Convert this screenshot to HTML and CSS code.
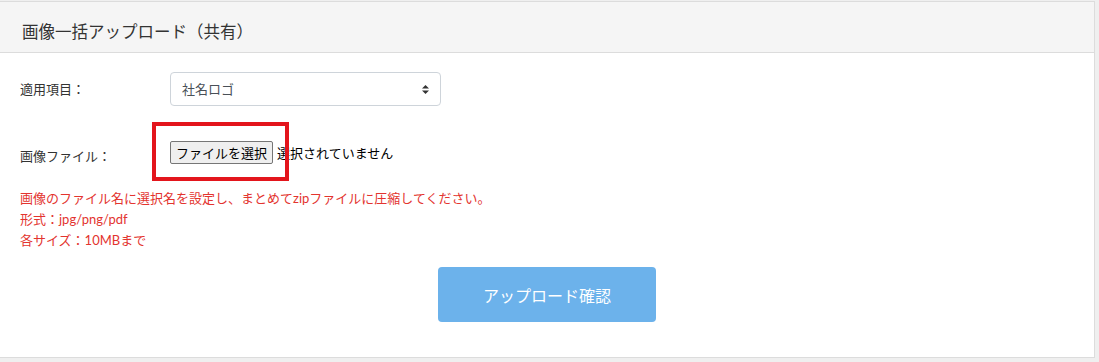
FILE: index.html
```html
<!DOCTYPE html>
<html lang="ja">
<head>
    <meta charset="UTF-8">
    <meta name="viewport" content="width=device-width, initial-scale=1.0">
    <title>画像一括アップロード（共有）</title>
    <link rel="stylesheet" href="styles.css">
</head>
<body>
    <div class="panel">
        <div class="panel-heading">画像一括アップロード（共有）</div>
        <div class="panel-body">
            <div class="form-row">
                <label class="form-label">適用項目：</label>
                <div class="select-wrap">
                    <select class="form-select">
                        <option>社名ロゴ</option>
                    </select>
                    <svg class="select-arrows" width="7" height="9" viewBox="0 0 7 9">
                        <path d="M3.5 0 L7 3.6 L0 3.6 Z" fill="#333"/>
                        <path d="M3.5 9 L7 5.4 L0 5.4 Z" fill="#333"/>
                    </svg>
                </div>
            </div>
            <div class="form-row file-row">
                <label class="form-label">画像ファイル：</label>
                <div class="file-input">
                    <button type="button" class="file-btn">ファイルを選択</button>
                    <span class="file-name">選択されていません</span>
                    <span class="mark"></span>
                </div>
            </div>
            <div class="notes">
                <p>画像のファイル名に選択名を設定し、まとめてzipファイルに圧縮してください。</p>
                <p>形式：jpg/png/pdf</p>
                <p>各サイズ：10MBまで</p>
            </div>
            <div class="actions">
                <button type="button" class="btn-confirm">アップロード確認</button>
            </div>
        </div>
    </div>
</body>
</html>
```

FILE: styles.css
```css
body {
    margin: 0;
    padding-top: 1px;
    background-color: #efefef;
    font-family: "Lato", "Noto Sans CJK JP", sans-serif;
    color: #333;
}
.panel {
    width: 1094px;
    background-color: #fff;
    border: 1px solid #dcdcdc;
    border-left: none;
}
.panel-heading {
    background-color: #f5f5f5;
    border-bottom: 1px solid #dcdcdc;
    padding: 19px 22px 9px;
    line-height: 22px;
    font-size: 16.5px;
}
.panel-body {
    padding: 19px 20px 35px 20px;
}
.form-row {
    display: grid;
    grid-template-columns: 150px auto;
    align-items: center;
}
.form-label {
    font-size: 13px;
    line-height: 20px;
    color: #333;
}
.select-wrap {
    position: relative;
    width: 271px;
}
.form-select {
    appearance: none;
    -webkit-appearance: none;
    width: 271px;
    height: 34px;
    padding: 0 11px;
    border: 1px solid #ced4da;
    border-radius: 4px;
    background-color: #fff;
    font-family: "Lato", "Noto Sans CJK JP", sans-serif;
    font-size: 13px;
    color: #495057;
}
.select-arrows {
    position: absolute;
    right: 12px;
    top: 13px;
}
.file-row {
    margin-top: 35px;
    align-items: start;
}
.file-row .form-label {
    padding-top: 5px;
}
.file-input {
    position: relative;
    display: flex;
    align-items: center;
    gap: 4px;
}
.file-btn {
    height: 23px;
    padding: 0 5px;
    background-color: #efefef;
    border: 1px solid #767676;
    border-radius: 2px;
    font-family: "Noto Sans CJK JP", sans-serif;
    font-size: 13px;
    color: #000;
}
.file-name {
    font-family: "Noto Sans CJK JP", sans-serif;
    font-size: 13px;
    color: #000;
}
.mark {
    position: absolute;
    left: -18px;
    top: -19px;
    width: 129px;
    height: 51px;
    border: 4px solid #e3151c;
}
.notes {
    margin-top: 22px;
    color: #e3342f;
    font-size: 13px;
    line-height: 21px;
}
.notes p {
    margin: 0;
}
.actions {
    margin-top: 16px;
    text-align: center;
}
.btn-confirm {
    width: 218px;
    height: 55px;
    border: none;
    border-radius: 4px;
    background-color: #6cb2eb;
    color: #fff;
    font-family: "Lato", "Noto Sans CJK JP", sans-serif;
    font-size: 16px;
}
```
